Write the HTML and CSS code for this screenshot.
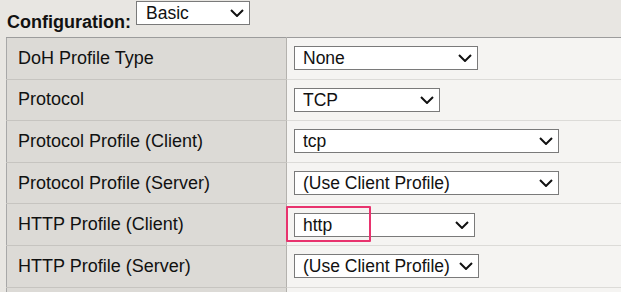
FILE: index.html
```html
<!DOCTYPE html>
<html lang="en">

<head>
	<meta charset="UTF-8">
	<meta name="viewport" content="width=device-width, initial-scale=1.0">
	<title>Configuration</title>
	<link rel="stylesheet" href="styles.css">
</head>

<body>
	<div class="config">
		<label class="config-label" for="config-mode">Configuration:</label>
		<span class="select select-basic">
			<select id="config-mode">
				<option>Basic</option>
				<option>Advanced</option>
			</select>
			<svg class="chevron" viewBox="0 0 14 8"><path d="M1 1l6 6 6-6"/></svg>
		</span>
	</div>
	<table class="props">
		<tr>
			<th>DoH Profile Type</th>
			<td>
				<span class="select select-none">
					<select><option>None</option></select>
					<svg class="chevron" viewBox="0 0 14 8"><path d="M1 1l6 6 6-6"/></svg>
				</span>
			</td>
		</tr>
		<tr>
			<th>Protocol</th>
			<td>
				<span class="select select-proto">
					<select><option>TCP</option></select>
					<svg class="chevron" viewBox="0 0 14 8"><path d="M1 1l6 6 6-6"/></svg>
				</span>
			</td>
		</tr>
		<tr>
			<th>Protocol Profile (Client)</th>
			<td>
				<span class="select select-wide">
					<select><option>tcp</option></select>
					<svg class="chevron" viewBox="0 0 14 8"><path d="M1 1l6 6 6-6"/></svg>
				</span>
			</td>
		</tr>
		<tr>
			<th>Protocol Profile (Server)</th>
			<td>
				<span class="select select-wide">
					<select><option>(Use Client Profile)</option></select>
					<svg class="chevron" viewBox="0 0 14 8"><path d="M1 1l6 6 6-6"/></svg>
				</span>
			</td>
		</tr>
		<tr>
			<th>HTTP Profile (Client)</th>
			<td>
				<span class="select select-http is-marked">
					<select><option>http</option></select>
					<svg class="chevron" viewBox="0 0 14 8"><path d="M1 1l6 6 6-6"/></svg>
				</span>
			</td>
		</tr>
		<tr>
			<th>HTTP Profile (Server)</th>
			<td>
				<span class="select select-fit">
					<select><option>(Use Client Profile)</option></select>
					<svg class="chevron" viewBox="0 0 14 8"><path d="M1 1l6 6 6-6"/></svg>
				</span>
			</td>
		</tr>
		<tr>
			<th></th>
			<td></td>
		</tr>
	</table>
</body>

</html>
```

FILE: styles.css
```css
*,
*::before,
*::after {
	box-sizing: border-box;
}

body {
	margin: 0;
	font-family: "Liberation Sans", Arial, sans-serif;
	font-size: 18px;
	color: #111111;
	background-color: #e8e6e2;
	overflow: hidden;
}

.config {
	display: flex;
	align-items: flex-start;
	gap: 5px;
	height: 37px;
	padding-left: 7px;
	padding-top: 1px;
}

.config-label {
	font-weight: bold;
	line-height: 20px;
	margin-top: 11px;
}

.select {
	position: relative;
	display: inline-block;
	vertical-align: middle;
	height: 24px;
	border: 1px solid #7a7a7a;
	background-color: #ffffff;
}

.select select {
	appearance: none;
	-webkit-appearance: none;
	display: block;
	width: 100%;
	height: 100%;
	margin: 0;
	padding: 0 24px 0 8px;
	border: 0;
	background: transparent;
	font: inherit;
	font-size: 17.5px;
	color: #111111;
	outline: none;
}

.chevron {
	position: absolute;
	top: 7px;
	right: 5px;
	width: 14px;
	height: 8px;
	fill: none;
	stroke: #111111;
	stroke-width: 2;
	pointer-events: none;
}

.select-basic {
	width: 114px;
}

.select-basic select {
	padding-left: 9px;
}

.select-none {
	width: 184px;
}

.select-proto {
	width: 146px;
}

.select-wide {
	width: 265px;
}

.select-http {
	width: 181px;
}

.select-fit {
	width: 185px;
}

.is-marked::after {
	content: '';
	position: absolute;
	top: -8px;
	left: -9px;
	width: 85px;
	height: 36px;
	border: 2px solid #e8336e;
	border-radius: 1px;
	pointer-events: none;
}

.props {
	margin-left: 6px;
	width: 660px;
	border-collapse: collapse;
	border-top: 1px solid #9c9c9c;
	border-left: 1px solid #a8a8a8;
}

.props th,
.props td {
	height: 41.6px;
	padding: 0;
	border-bottom: 1px solid #c6c4c0;
	vertical-align: middle;
	text-align: left;
}

.props th {
	width: 280px;
	padding-left: 11px;
	font-weight: normal;
	background-color: #dcdad6;
	border-right: 1px solid #b4b2ae;
}

.props td {
	padding-left: 7px;
	background-color: #f5f4f2;
	border-bottom-color: #dcdbd8;
}
```
